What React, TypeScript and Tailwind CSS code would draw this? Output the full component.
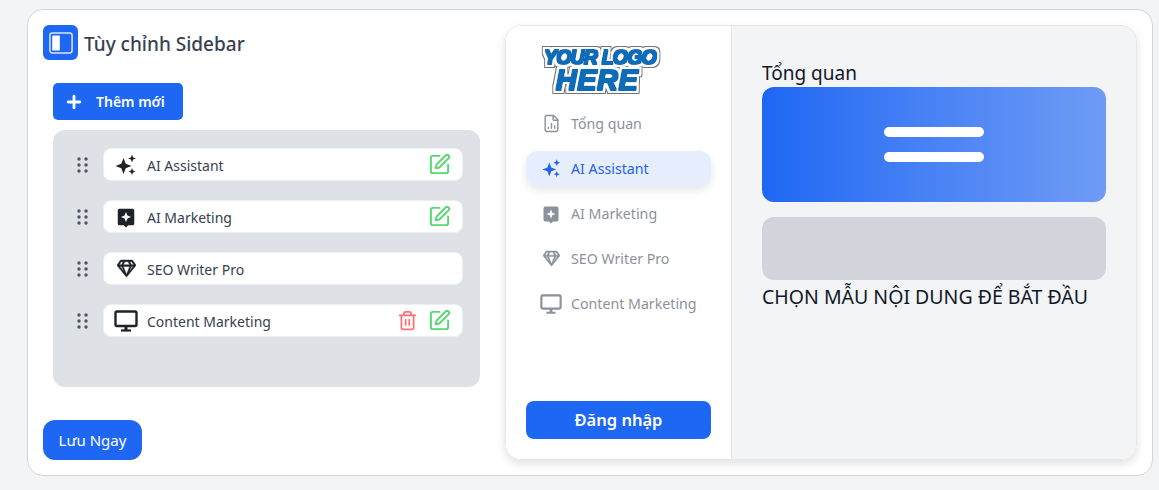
import { Plus, SquarePen, Trash2, FileChartColumn } from "lucide-react";
import { FaRegGem } from "react-icons/fa";

const font = "font-['Noto_Sans','Open_Sans',sans-serif]";

function Sparkles({ className }: { className?: string }) {
  return (
    <svg viewBox="0 0 24 24" fill="currentColor" className={className}>
      <path d="M9.500 5 11.700 10.800 17.500 13 11.700 15.200 9.500 21 7.300 15.200 1.500 13 7.300 10.800z" />
      <path d="M18 1.500 19.100 4.400 22 5.500 19.100 6.600 18 9.500 16.900 6.600 14 5.500 16.900 4.400z" />
      <path d="M18 15 19 17.500 21.500 18.500 19 19.500 18 22 17 19.500 14.500 18.500 17 17.500z" />
    </svg>
  );
}

function Bubble({ className }: { className?: string }) {
  return (
    <svg viewBox="0 0 24 24" className={className}>
      <path
        fill="currentColor"
        d="M5 3h14a2 2 0 0 1 2 2v14a2 2 0 0 1-2 2h-4.500L12 23.500 9.500 21H5a2 2 0 0 1-2-2V5a2 2 0 0 1 2-2z"
      />
      <path fill="#fff" d="M12 6.500 13.600 10.400 17.500 12 13.600 13.600 12 17.500 10.400 13.600 6.500 12 10.400 10.400z" />
    </svg>
  );
}

function Monitor({ className }: { className?: string }) {
  return (
    <svg viewBox="0 0 24 24" className={className} fill="none" stroke="currentColor">
      <rect x="1.500" y="2.500" width="21" height="14.500" rx="1.500" strokeWidth="2.400" />
      <path d="M12 17v4" strokeWidth="3" />
      <path d="M7 21.500h10" strokeWidth="2.200" />
    </svg>
  );
}

function Grip() {
  return (
    <svg viewBox="0 0 11 16" className="w-[11px] h-[16px] text-[#4b5563]" fill="currentColor">
      {[2, 8, 14].map((y) => (
        <g key={y}>
          <circle cx="2" cy={y} r="1.700" />
          <circle cx="9" cy={y} r="1.700" />
        </g>
      ))}
    </svg>
  );
}

function Logo() {
  return (
    <svg viewBox="0 0 122 54" className="w-[122px] h-[54px]">
      <defs>
        <filter id="sticker" x="-10%" y="-20%" width="120%" height="140%">
          <feMorphology in="SourceGraphic" operator="dilate" radius="0.500" result="ink" />
          <feMorphology in="SourceAlpha" operator="dilate" radius="2.600" result="halo" />
          <feFlood floodColor="#ffffff" />
          <feComposite in2="halo" operator="in" result="white" />
          <feMorphology in="SourceAlpha" operator="dilate" radius="3.800" result="edge" />
          <feFlood floodColor="#6f7376" />
          <feComposite in2="edge" operator="in" result="gray" />
          <feMerge>
            <feMergeNode in="gray" />
            <feMergeNode in="white" />
            <feMergeNode in="ink" />
          </feMerge>
        </filter>
      </defs>
      <text
        filter="url(#sticker)"
        fontFamily="'Liberation Sans', sans-serif"
        fontWeight={700}
        fontStyle="italic"
        fill="#0f6cb8"
        textAnchor="middle"
      >
        <tspan x="60" y="21" fontSize="19.500" letterSpacing="-0.800">
          YOUR LOGO
        </tspan>
        <tspan x="57" y="47" fontSize="29" letterSpacing="0.500">
          HERE
        </tspan>
      </text>
    </svg>
  );
}

function EditRow({
  icon,
  label,
  edit,
  remove,
}: {
  icon: React.ReactNode;
  label: string;
  edit?: boolean;
  remove?: boolean;
}) {
  return (
    <div className="flex items-center gap-[15px]">
      <Grip />
      <div className="flex-1 h-[33px] bg-white rounded-lg border border-[#eceef1] flex items-center pl-[10px] pr-[11px]">
        <span className="w-[24px] flex justify-center text-[#1f2328]">{icon}</span>
        <span className="ml-[9px] pt-[2px] text-[14px] text-[#374151]">{label}</span>
        <span className="ml-auto flex items-center gap-[10px]">
          {remove && <Trash2 className="w-[21px] h-[21px] text-[#ff7078]" strokeWidth={2} />}
          {edit && <SquarePen className="w-[23px] h-[23px] text-[#56d870]" strokeWidth={2} />}
        </span>
      </div>
    </div>
  );
}

function NavItem({
  icon,
  label,
  active,
}: {
  icon: React.ReactNode;
  label: string;
  active?: boolean;
}) {
  return (
    <div
      className={
        active
          ? "h-[35px] rounded-xl flex items-center pl-[14px] bg-[#e6edfc] text-[#2563eb] shadow-[0_4px_8px_rgba(0,0,0,0.1)]"
          : "h-[35px] rounded-xl flex items-center pl-[14px] text-[#8b929c]"
      }
    >
      <span className="w-[22px] flex justify-center">{icon}</span>
      <span className="ml-[9px] text-[14.200px]">{label}</span>
    </div>
  );
}

export default function App() {
  return (
    <div className={`${font} min-h-[490px] bg-[#f3f4f6] pt-[9px] pl-[27px]`}>
      <div className="w-[1126px] h-[467px] bg-white border border-[#d1d5db] rounded-2xl flex pl-[15px] pt-[15px]">
        {/* editor */}
        <div className="w-[462px] flex flex-col">
          <div className="flex items-center gap-[6px]">
            <div className="w-[35px] h-[35px] rounded-md bg-[#1d67f3] flex items-center justify-center">
              <svg viewBox="0 0 24 24" className="w-[28px] h-[28px]" fill="none">
                <rect x="2.500" y="3.500" width="19" height="17" rx="2" stroke="#dbe7ff" strokeWidth="1.300" />
                <rect x="4.500" y="5.500" width="6.500" height="13" rx="0.500" fill="#fff" />
              </svg>
            </div>
            <h1 className="mt-[3px] text-[19px] font-medium text-[#374151]">Tùy chỉnh Sidebar</h1>
          </div>

          <div className="ml-[10px] mt-[23px] w-[427px]">
            <button className="w-[130px] h-[37px] rounded-[5px] bg-[#1d67f3] text-white flex items-center pl-[11px]">
              <Plus className="w-[20px] h-[20px]" strokeWidth={3.400} />
              <span className="ml-[12px] text-[14px] font-semibold">Thêm mới</span>
            </button>
            <div className="mt-[10px] h-[257px] rounded-xl bg-[#dee1e6] pl-[24px] pr-[17px] pt-[18px] flex flex-col gap-[19px]">
              <EditRow icon={<Sparkles className="w-[24px] h-[24px]" />} label="AI Assistant" edit />
              <EditRow icon={<Bubble className="w-[22px] h-[22px]" />} label="AI Marketing" edit />
              <EditRow icon={<FaRegGem className="w-[19px] h-[19px]" stroke="currentColor" strokeWidth={14} />} label="SEO Writer Pro" />
              <EditRow icon={<Monitor className="w-[24px] h-[24px]" />} label="Content Marketing" edit remove />
            </div>
          </div>

          <button className="mt-[33px] w-[99px] h-[40px] rounded-xl bg-[#1d67f3] text-white text-[15px]">
            Lưu Ngay
          </button>
        </div>

        {/* preview */}
        <div className="w-[632px] h-[435px] rounded-2xl border border-[#e5e7eb] shadow-[0_4px_10px_rgba(0,0,0,0.12)] flex overflow-hidden">
          <div className="w-[226px] bg-white border-r border-[#e5e7eb] flex flex-col px-[20px] pt-[17px] pb-[20px]">
            <div className="pl-[14px]">
              <Logo />
            </div>
            <div className="mt-[9px] flex flex-col gap-[10px]">
              <NavItem icon={<FileChartColumn className="w-[19px] h-[19px]" strokeWidth={1.800} />} label="Tổng quan" />
              <NavItem icon={<Sparkles className="w-[21px] h-[21px]" />} label="AI Assistant" active />
              <NavItem icon={<Bubble className="w-[20px] h-[20px]" />} label="AI Marketing" />
              <NavItem icon={<FaRegGem className="w-[17px] h-[17px]" stroke="currentColor" strokeWidth={14} />} label="SEO Writer Pro" />
              <NavItem icon={<Monitor className="w-[22px] h-[22px]" />} label="Content Marketing" />
            </div>
            <button className="mt-auto h-[38px] rounded-lg bg-[#1d67f3] text-white text-[16.500px] font-semibold">
              Đăng nhập
            </button>
          </div>
          <div className="flex-1 bg-[#f3f4f6] pl-[30px] pr-[30px] pt-[35px] text-[#111827]">
            <div className="text-[19px] leading-[26px] -mt-[1px] pb-[1px]">Tổng quan</div>
            <div className="h-[115px] rounded-xl bg-gradient-to-r from-[#1d67f3] to-[#6f9bf5] flex flex-col items-center justify-center gap-[15px]">
              <div className="w-[100px] h-[10px] rounded-full bg-white" />
              <div className="w-[100px] h-[10px] rounded-full bg-white" />
            </div>
            <div className="mt-[15px] h-[63px] rounded-xl bg-[#d1d5db]" />
            <div className="mt-[4px] text-[19.500px] leading-[26px]">CHỌN MẪU NỘI DUNG ĐỂ BẮT ĐẦU</div>
          </div>
        </div>
      </div>
    </div>
  );
}
